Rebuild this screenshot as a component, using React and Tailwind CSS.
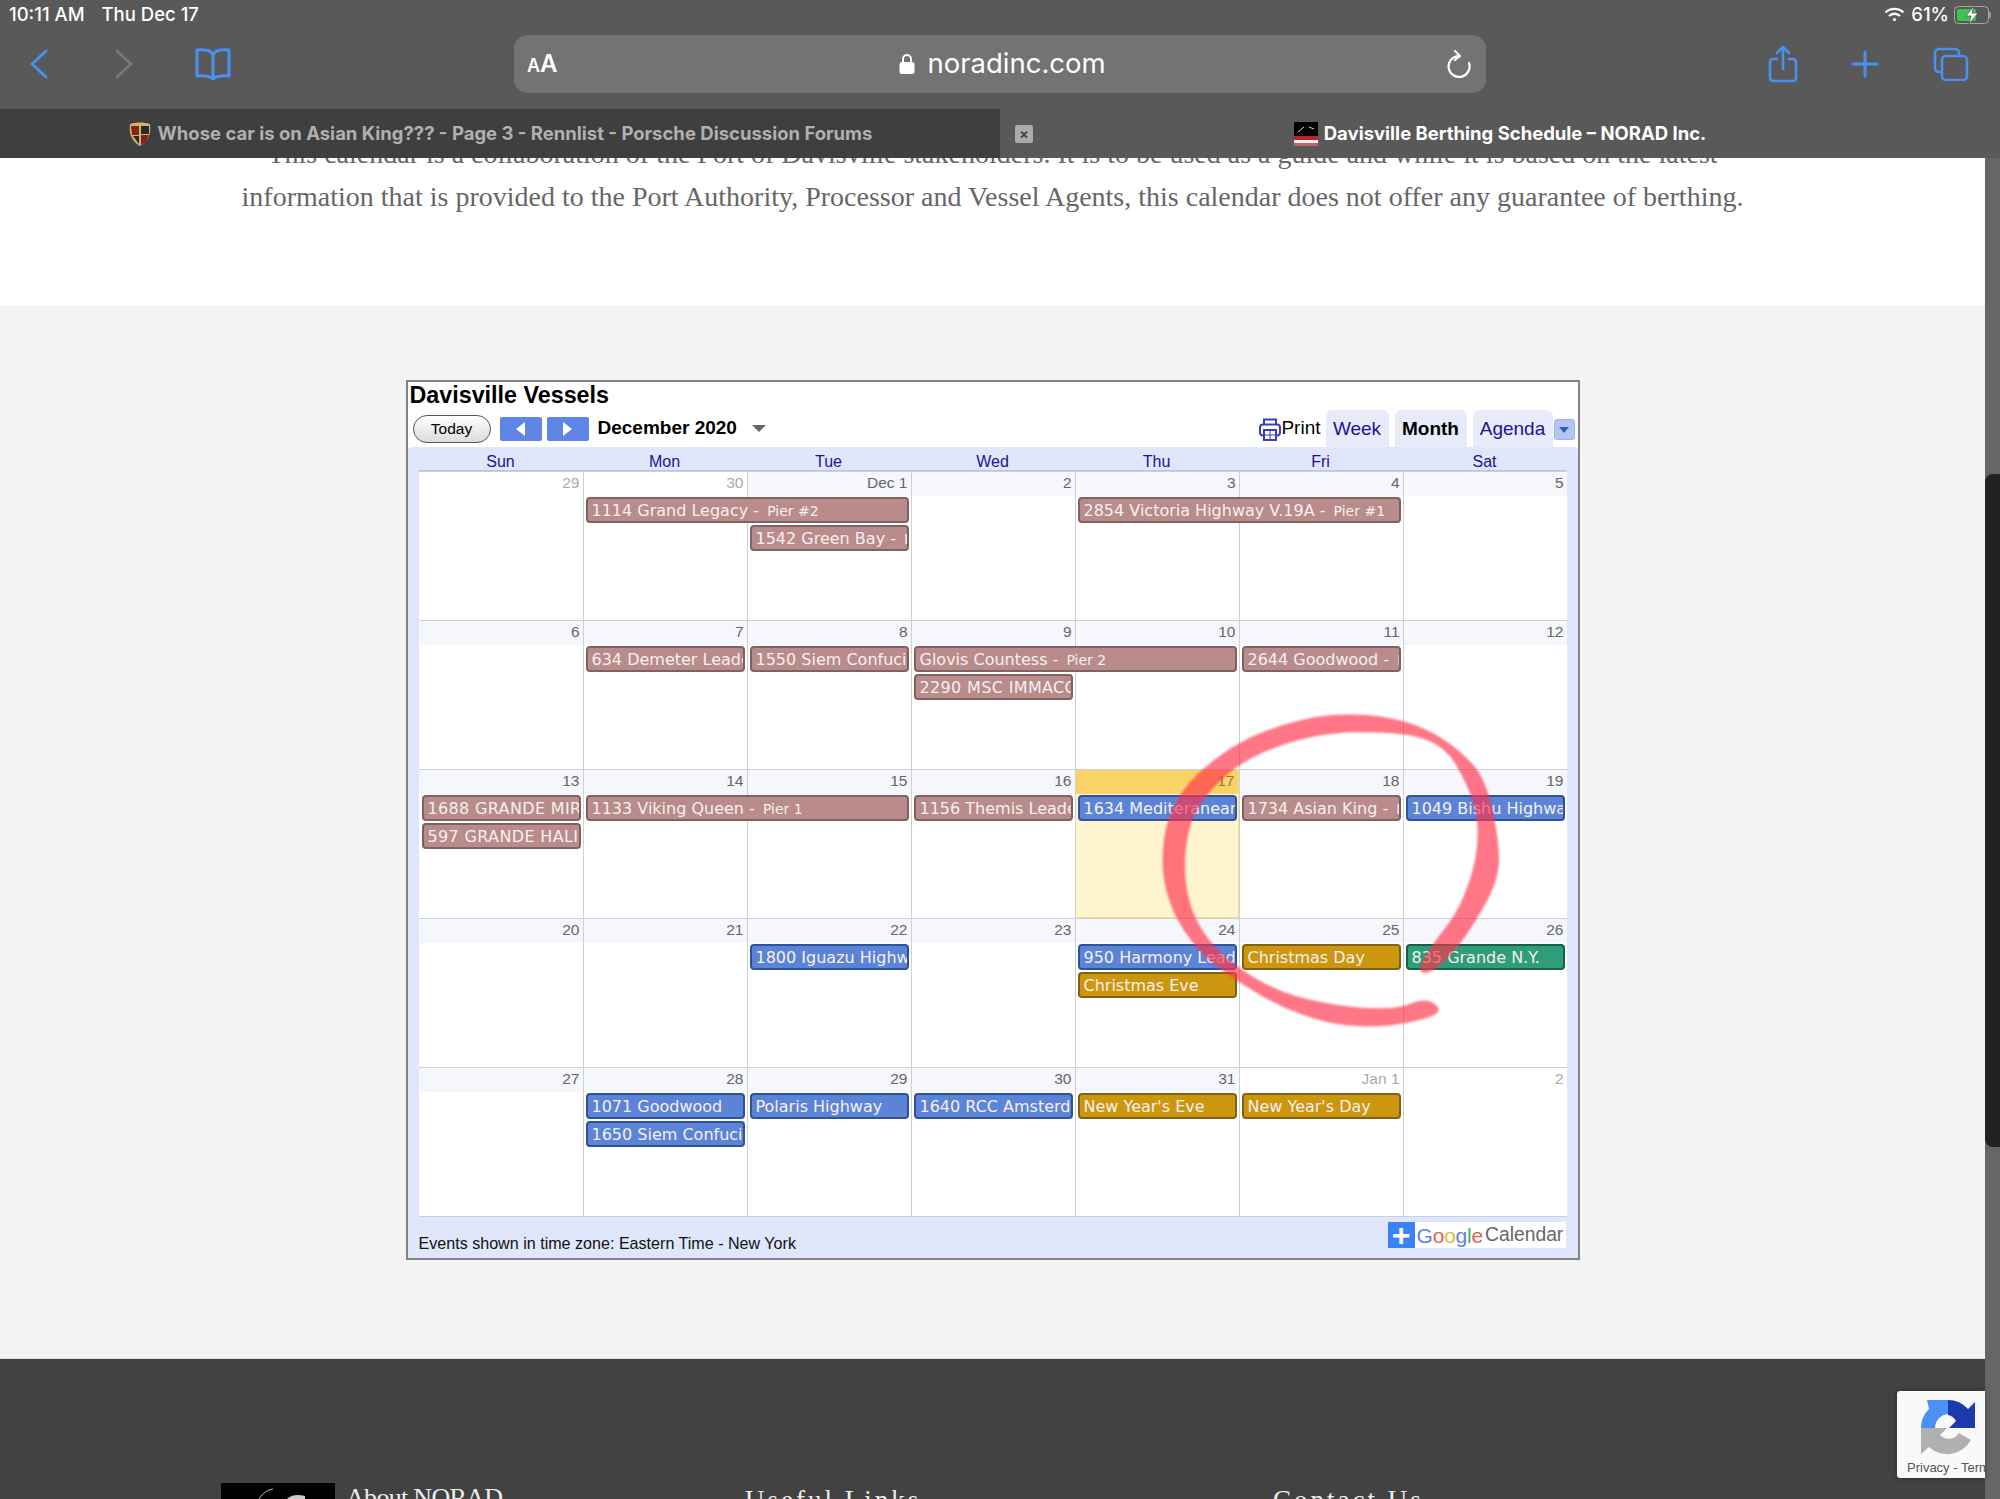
const arial = { fontFamily: '"Liberation Sans", Arial, sans-serif' };

const dayNames = ["Sun", "Mon", "Tue", "Wed", "Thu", "Fri", "Sat"];

const rose = "bg-[#b98b8b] border-[#7f6262]";
const blue = "bg-[#5c84d6] border-[#2f5398]";
const amber = "bg-[#cc960f] border-[#7f6214]";
const green = "bg-[#2f9c7a] border-[#17604a]";

const weeks = [
  {
    days: ["29", "30", "Dec 1", "2", "3", "4", "5"],
    dim: [0, 1],
    events: [
      { col: 1, span: 2, lane: 0, color: rose, text: "1114 Grand Legacy", pier: "Pier #2" },
      { col: 2, span: 1, lane: 1, color: rose, text: "1542 Green Bay", pier: "Pier #2" },
      { col: 4, span: 2, lane: 0, color: rose, text: "2854 Victoria Highway V.19A", pier: "Pier #1" },
    ],
  },
  {
    days: ["6", "7", "8", "9", "10", "11", "12"],
    dim: [],
    events: [
      { col: 1, span: 1, lane: 0, color: rose, text: "634 Demeter Leader" },
      { col: 2, span: 1, lane: 0, color: rose, text: "1550 Siem Confucius" },
      { col: 3, span: 2, lane: 0, color: rose, text: "Glovis Countess", pier: "Pier 2" },
      { col: 3, span: 1, lane: 1, color: rose, text: "2290 MSC IMMACOLATA", caps: true },
      { col: 5, span: 1, lane: 0, color: rose, text: "2644 Goodwood", pier: "Pier #1" },
    ],
  },
  {
    days: ["13", "14", "15", "16", "17", "18", "19"],
    dim: [],
    today: 4,
    events: [
      { col: 0, span: 1, lane: 0, color: rose, text: "1688 GRANDE MIRAGLIA", caps: true },
      { col: 0, span: 1, lane: 1, color: rose, text: "597 GRANDE HALIFAX", caps: true },
      { col: 1, span: 2, lane: 0, color: rose, text: "1133 Viking Queen", pier: "Pier 1" },
      { col: 3, span: 1, lane: 0, color: rose, text: "1156 Themis Leader" },
      { col: 4, span: 1, lane: 0, color: blue, text: "1634 Mediteranean" },
      { col: 5, span: 1, lane: 0, color: rose, text: "1734 Asian King", pier: "Pier #1" },
      { col: 6, span: 1, lane: 0, color: blue, text: "1049 Bishu Highway" },
    ],
  },
  {
    days: ["20", "21", "22", "23", "24", "25", "26"],
    dim: [],
    events: [
      { col: 2, span: 1, lane: 0, color: blue, text: "1800 Iguazu Highway" },
      { col: 4, span: 1, lane: 0, color: blue, text: "950 Harmony Leader" },
      { col: 4, span: 1, lane: 1, color: amber, text: "Christmas Eve" },
      { col: 5, span: 1, lane: 0, color: amber, text: "Christmas Day" },
      { col: 6, span: 1, lane: 0, color: green, text: "835 Grande N.Y." },
    ],
  },
  {
    days: ["27", "28", "29", "30", "31", "Jan 1", "2"],
    dim: [5, 6],
    events: [
      { col: 1, span: 1, lane: 0, color: blue, text: "1071 Goodwood" },
      { col: 1, span: 1, lane: 1, color: blue, text: "1650 Siem Confucius" },
      { col: 2, span: 1, lane: 0, color: blue, text: "Polaris Highway" },
      { col: 3, span: 1, lane: 0, color: blue, text: "1640 RCC Amsterdam" },
      { col: 4, span: 1, lane: 0, color: amber, text: "New Year's Eve" },
      { col: 5, span: 1, lane: 0, color: amber, text: "New Year's Day" },
    ],
  },
];

// smooth closed path through hand-read points of the marker stroke
const markerPoints = [
  [985, 825], [1060, 760], [1130, 660], [1190, 550], [1202, 450], [1160, 240], [1080, 150], [970, 80],
  [840, 45], [680, 42], [540, 75], [420, 125], [320, 195], [250, 265], [200, 360], [185, 470], [195, 570],
  [235, 670], [310, 770], [420, 850], [540, 920], [680, 970], [800, 982], [920, 972], [1035, 938], [980, 892],
  [900, 925], [780, 925], [650, 905], [540, 875], [430, 815], [340, 740], [280, 650], [255, 550], [255, 440],
  [280, 340], [340, 260], [420, 190], [550, 130], [700, 97], [850, 97], [960, 108], [1040, 150], [1090, 230],
  [1130, 330], [1135, 430], [1115, 530], [1070, 640], [1000, 730], [950, 810],
];
const markerPath = () => {
  const mid = (a, b) => [(a[0] + b[0]) / 2, (a[1] + b[1]) / 2];
  const n = markerPoints.length;
  const start = mid(markerPoints[n - 1], markerPoints[0]);
  let d = `M${start[0]} ${start[1]}`;
  markerPoints.forEach((p, i) => {
    const m = mid(p, markerPoints[(i + 1) % n]);
    d += ` Q${p[0]} ${p[1]} ${m[0]} ${m[1]}`;
  });
  return d + " Z";
};

const EventBar = ({ event }) => (
  <div
    className={`z-10 ml-[3px] mr-[2px] h-[26px] overflow-hidden whitespace-nowrap rounded-[4px] border-2 pl-[4px] text-[16px] leading-[23px] text-[#f6f0f0] ${
      event.caps ? "tracking-[0.35px]" : ""
    } ${event.color}`}
    style={{
      gridColumn: `${event.col + 1} / span ${event.span}`,
      gridRow: event.lane + 2,
      fontFamily: '"DejaVu Sans", Verdana, sans-serif',
    }}
  >
    {event.text}
    {event.pier && (
      <>
        {" - "}
        <span className="ml-[3px] text-[14px]">{event.pier}</span>
      </>
    )}
  </div>
);

const Week = ({ week }) => (
  <div className="grid h-[149px] grid-cols-[repeat(7,164px)] grid-rows-[26px_28px_28px_1fr] bg-white">
    {week.days.map((day, i) => {
      const dim = week.dim.includes(i);
      const today = week.today === i;
      return (
        <div
          key={i}
          className={`border-t border-[#d0d0d0] ${i > 0 ? "border-l" : ""} ${
            today ? "border-b border-r border-b-[#f7dc8c] border-r-[#f7dc8c] bg-[#fef4cf]" : ""
          }`}
          style={{ gridColumn: i + 1, gridRow: "1 / -1" }}
        >
          <div
            className={`h-[24px] pr-[3px] text-right text-[15.5px] leading-[22px] ${
              today ? "bg-[#fad366] text-[#8a7a50]" : dim ? "text-[#aaaaaa]" : "bg-[#f5f7fc] text-[#666666]"
            }`}
          >
            {day}
          </div>
        </div>
      );
    })}
    {week.events.map((event) => (
      <EventBar key={event.text} event={event} />
    ))}
  </div>
);

const PrintIcon = () => (
  <svg width="22" height="24" viewBox="0 0 22 24" fill="none" stroke="#3a3fc0" strokeWidth="2">
    <path d="M5 8V2.5h12V8" />
    <rect x="1" y="7.5" width="20" height="11" rx="3" />
    <rect x="5" y="13" width="12" height="10" fill="#fff" />
    <path d="M5 18h12M11 13v10" strokeWidth="1" />
  </svg>
);

const Calendar = () => (
  <div className="mx-auto mt-[74px] h-[880px] w-[1174px] border-2 border-[#808488] bg-white text-black" style={arial}>
    <div className="h-[28px] pl-[2px] text-[23.3px] font-bold leading-[26px]">Davisville Vessels</div>
    <div className="flex h-[37px] items-center">
      <div className="ml-[5px] flex h-[28px] w-[78px] items-center justify-center rounded-full border border-[#555] bg-gradient-to-b from-white to-[#dcdcdc] text-[15.5px]">
        Today
      </div>
      <div className="ml-[9px] flex h-[24px] w-[42px] items-center justify-center rounded-[2px] bg-[#5f86e6]">
        <div className="h-0 w-0 border-y-[7px] border-r-[9px] border-y-transparent border-r-white" />
      </div>
      <div className="ml-[5px] flex h-[24px] w-[42px] items-center justify-center rounded-[2px] bg-[#5f86e6]">
        <div className="h-0 w-0 border-y-[7px] border-l-[9px] border-y-transparent border-l-white" />
      </div>
      <div className="ml-[9px] text-[19px] font-bold">December 2020</div>
      <div className="ml-[15px] h-0 w-0 border-x-[7px] border-t-[7px] border-x-transparent border-t-[#666]" />
      <div className="ml-auto flex items-center self-stretch">
        <PrintIcon />
        <div className="text-[19px]">Print</div>
        <div className="ml-[5px] flex h-[37px] w-[63px] items-center justify-center rounded-t-[6px] bg-[#e8ecfa] pt-[2px] text-[19px] text-[#20109a]">
          Week
        </div>
        <div className="ml-[6px] flex h-[37px] w-[72px] items-center justify-center rounded-t-[6px] bg-[#e8ecfa] pt-[2px] text-[19px] font-bold">
          Month
        </div>
        <div className="ml-[6px] flex h-[37px] w-[80px] items-center justify-center rounded-t-[6px] bg-[#e8ecfa] pt-[2px] text-[19px] text-[#20109a]">
          Agenda
        </div>
        <div className="ml-[1px] mr-[3px] mt-[2px] flex h-[21px] w-[21px] items-center justify-center rounded-[3px] border border-[#9db2ea] bg-[#b3c5f2]">
          <div className="h-0 w-0 border-x-[5px] border-t-[6px] border-x-transparent border-t-[#2f5fc4]" />
        </div>
      </div>
    </div>
    <div className="h-[811px] rounded-t-[4px] bg-[#e0e7fb] pl-[11px] pr-[11px]">
      <div className="grid h-[24px] grid-cols-[repeat(7,164px)] border-b border-[#b4c3f0]">
        {dayNames.map((name) => (
          <div key={name} className="text-center text-[16px] leading-[30px] text-[#20109a]">
            {name}
          </div>
        ))}
      </div>
      {weeks.map((week) => (
        <Week key={week.days[0]} week={week} />
      ))}
      <div className="flex items-start justify-between border-t border-[#c4cfee] pt-[5px]">
        <div className="mt-[11px] text-[16.1px] leading-[20px] text-[#111]">Events shown in time zone: Eastern Time - New York</div>
        <div className="mr-[1px] flex h-[26px] w-[178px] items-center bg-white">
          <div className="flex h-[26px] w-[27px] items-center justify-center bg-[#3b82f6] text-[32px] font-bold leading-none text-white">
            +
          </div>
          <div className="ml-[2px] pt-[1px] text-[21px] tracking-[-0.2px]">
            <span className="text-[#5a85d8]">G</span>
            <span className="text-[#e0604f]">o</span>
            <span className="text-[#e6b93a]">o</span>
            <span className="text-[#5a85d8]">g</span>
            <span className="text-[#4fa865]">l</span>
            <span className="text-[#e0604f]">e</span>
          </div>
          <div className="ml-[2px] pt-[1px] text-[19.3px] text-[#666]">Calendar</div>
        </div>
      </div>
    </div>
  </div>
);

const Chrome = () => (
  <div className="relative z-20 h-[158px] bg-[#595959] text-white" style={{ fontFamily: "Inter, sans-serif" }}>
    <div className="flex h-[28px] items-center pl-[9px] pr-[8px] pt-[1px] text-[18.5px] font-medium">
      <span>10:11 AM</span>
      <span className="ml-[17px]">Thu Dec 17</span>
      <svg className="ml-auto" width="21" height="15" viewBox="0 0 21 15" fill="none" stroke="#fff" strokeWidth="2.4">
        <path d="M1.5 5.5a13 13 0 0 1 18 0M5 9a8 8 0 0 1 11 0" />
        <circle cx="10.5" cy="12.5" r="1.6" fill="#fff" stroke="none" />
      </svg>
      <span className="ml-[6px]">61%</span>
      <svg className="ml-[5px]" width="38" height="18" viewBox="0 0 38 18">
        <rect x="0.5" y="0.5" width="34" height="17" rx="4" fill="none" stroke="#a8a8a8" />
        <rect x="3" y="3" width="19" height="12" rx="2" fill="#3cc452" />
        <path d="M36 6v6" stroke="#a8a8a8" strokeWidth="1.5" />
        <path d="M20 0l-8 10h5l-2 8 9-11h-6z" fill="#fff" stroke="#595959" strokeWidth="0.8" />
      </svg>
    </div>
    <div className="flex h-[81px] items-center pb-[9px]">
      <div className="flex w-[514px] items-center">
        <svg className="ml-[29px]" width="20" height="30" viewBox="0 0 20 30" fill="none" stroke="#4a90f0" strokeWidth="3" strokeLinecap="round" strokeLinejoin="round">
          <path d="M17 2L3 15l14 13" />
        </svg>
        <svg className="ml-[65px]" width="20" height="30" viewBox="0 0 20 30" fill="none" stroke="#777" strokeWidth="3" strokeLinecap="round" strokeLinejoin="round">
          <path d="M3 2l14 13L3 28" />
        </svg>
        <svg className="ml-[60px]" width="38" height="32" viewBox="0 0 38 32" fill="none" stroke="#4a90f0" strokeWidth="3" strokeLinejoin="round">
          <path d="M19 7C17 2 12 1.5 3 2v26c8-.5 13 0 16 3 3-3 8-3.500 16-3V2c-9-.5-14 0-16 5zM19 7v23" />
        </svg>
      </div>
      <div className="relative flex h-[58px] w-[972px] items-center justify-center rounded-[14px] bg-[#737373]">
        <div className="absolute left-[13px] font-semibold">
          <span className="text-[18px]">A</span>
          <span className="text-[24px]">A</span>
        </div>
        <svg width="16" height="22" viewBox="0 0 16 22" className="ml-[5px] mr-[12px]">
          <path d="M4 10V6a4 4 0 0 1 8 0v4" fill="none" stroke="#fff" strokeWidth="2" />
          <rect x="0.5" y="9" width="15" height="12" rx="2.500" fill="#fff" />
        </svg>
        <span className="text-[27.5px] leading-none">noradinc.com</span>
        <svg className="absolute left-[932px]" width="26" height="28" viewBox="0 0 26 28" fill="none" stroke="#fff" strokeWidth="2.2" strokeLinecap="round" strokeLinejoin="round">
          <path d="M12 6a10.500 10.500 0 1 0 11 7M9 1l5 5-5 4" />
        </svg>
      </div>
      <div className="flex items-center">
        <svg className="ml-[282px]" width="30" height="38" viewBox="0 0 30 38" fill="none" stroke="#4a90f0" strokeWidth="2.6" strokeLinecap="round" strokeLinejoin="round">
          <path d="M9 14H5a3 3 0 0 0-3 3v16a3 3 0 0 0 3 3h20a3 3 0 0 0 3-3V17a3 3 0 0 0-3-3h-4M15 24V2M9 8l6-6 6 6" />
        </svg>
        <svg className="ml-[53px]" width="28" height="28" viewBox="0 0 28 28" fill="none" stroke="#4a90f0" strokeWidth="3" strokeLinecap="round">
          <path d="M14 2v24M2 14h24" />
        </svg>
        <svg className="ml-[54px]" width="36" height="34" viewBox="0 0 36 34" fill="none" stroke="#4a90f0" strokeWidth="2.6" strokeLinejoin="round">
          <path d="M9 25H6a4 4 0 0 1-4-4V6a4 4 0 0 1 4-4h16a4 4 0 0 1 4 4v3" />
          <rect x="9" y="9" width="25" height="24" rx="4" />
        </svg>
      </div>
    </div>
    <div className="flex h-[49px] text-[18.5px] font-bold">
      <div className="flex w-[1000px] items-center justify-center bg-[#3f3f3f] text-[#b0b0b0]">
        <svg width="24" height="24" viewBox="0 0 24 24" className="mr-[6px]">
          <path d="M2 2c6-2 14-2 20 0 1 8 0 16-10 22C2 18 1 10 2 2z" fill="#c9b46a" />
          <path d="M3 4h8v9H4zM13 13h8l-3 7-5 3z" fill="#8a2020" />
          <path d="M13 4h8v8h-8zM5 14h6v8z" fill="#2a2a2a" />
        </svg>
        <span>Whose car is on Asian King??? - Page 3 - Rennlist - Porsche Discussion Forums</span>
      </div>
      <div className="relative flex flex-1 items-center justify-center">
        <div className="absolute left-[15px] top-[16px] flex h-[18px] w-[18px] items-center justify-center rounded-[2px] bg-[#ababab] text-[14px] font-bold leading-none text-[#444]">
          ×
        </div>
        <svg width="24" height="24" viewBox="0 0 24 24" className="mr-[6px]">
          <rect width="24" height="16" fill="#000" />
          <path d="M4 10l6-5M15 5l5 2" stroke="#ddd" strokeWidth="1" />
          <rect y="14" width="24" height="4" fill="#b3272d" />
          <rect y="18" width="24" height="3" fill="#eee" />
          <rect y="21" width="24" height="3" fill="#b36a6a" />
        </svg>
        <span>Davisville Berthing Schedule – NORAD Inc.</span>
      </div>
    </div>
  </div>
);

const Recaptcha = () => (
  <div className="absolute right-0 top-[1233px] flex h-[87px] w-[88px] flex-col items-start overflow-hidden rounded-l-[3px] bg-[#f9f9f9] shadow-[0_0_5px_rgba(0,0,0,0.35)]" style={arial}>
    <svg className="ml-[24px] mt-[9px] flex-none" width="54" height="55" viewBox="0 0 54 55">
      <path d="M27 0A27 27 0 0 1 47 9L54 2V28H28L35 21A12 12 0 0 0 27 15Z" fill="#1c3aa9" />
      <path d="M0 28A27 27 0 0 1 8 9L6 0H27V14A14 14 0 0 0 14 28Z" fill="#4a90f5" />
      <path d="M0 28H26L19 35A12 12 0 0 0 38 33L50 40A27 27 0 0 1 8 47L0 54Z" fill="#b0b0b0" />
    </svg>
    <div className="ml-[10px] mt-[5px] flex-none whitespace-nowrap text-[13px] leading-[16px] text-[#555]">Privacy - Terms</div>
  </div>
);

const Footer = () => (
  <div className="flex h-[141px] overflow-hidden border-t border-[#dddddd] bg-[#424242] pl-[221px] pt-[124px] text-[27px] leading-[30px] text-[#eeeeee]" style={{ fontFamily: '"Liberation Serif", serif' }}>
    <div className="flex w-[524px] items-start">
      <div className="h-[40px] w-[114px] flex-none bg-black">
        <svg width="114" height="16" viewBox="0 0 114 16" fill="none">
          <path d="M38 16c4-6 8-9 14-10" stroke="#bbb" strokeWidth="1" />
          <path d="M66 16c4-4 10-5 18-3v3z" fill="#ccc" />
        </svg>
      </div>
      <div className="ml-[11px] text-[26px] tracking-[-0.7px]">About NORAD</div>
    </div>
    <div className="mt-[2px] w-[528px] tracking-[3px]">Useful Links</div>
    <div className="mt-[2px] tracking-[3px]">Contact Us</div>
  </div>
);

const App = () => (
  <div className="relative h-[1499px] w-[2000px] overflow-hidden bg-white">
    <Chrome />
    <div className="flex">
      <div className="relative w-[1985px]">
        <div className="flow-root h-[148px] bg-white">
          <p
            className="-mt-[26px] whitespace-nowrap text-center text-[28px] leading-[43px] text-[#666666]"
            style={{ fontFamily: '"Liberation Serif", serif' }}
          >
            This calendar is a collaboration of the Port of Davisville stakeholders. It is to be used as a guide and while it is based on the latest
            <br />
            information that is provided to the Port Authority, Processor and Vessel Agents, this calendar does not offer any guarantee of berthing.
          </p>
        </div>
        <div className="flow-root h-[1052px] bg-[#f3f3f3]">
          <Calendar />
        </div>
        <Footer />
        <Recaptcha />
      </div>
      <div className="h-[1341px] w-[15px] bg-[#666666] pt-[316px]">
        <div className="h-[673px] rounded-l-[8px] bg-[#222222]" />
      </div>
    </div>
    <svg className="pointer-events-none absolute left-[1100px] top-[700px] z-10 blur-[1px]" width="500" height="350" viewBox="0 0 1500 1050">
      <path d={markerPath()} fill="#ff3048" fillOpacity="0.66" />
    </svg>
  </div>
);

export default App;
